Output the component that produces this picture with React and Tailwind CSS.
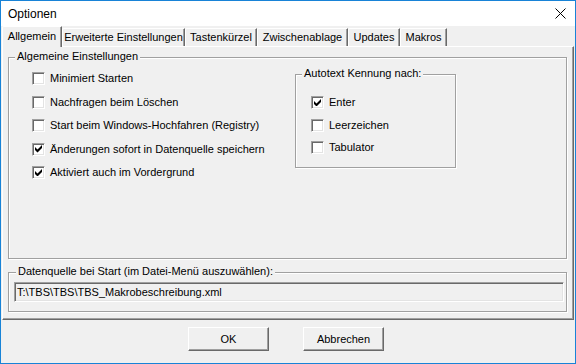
import React from "react";

const font = { fontFamily: '"Liberation Sans", Arial, sans-serif' };

function Check({ checked }) {
  return (
    <div className="w-[13px] h-[13px] shrink-0 bg-white border border-t-[#a0a0a0] border-l-[#a0a0a0] border-b-white border-r-white shadow-[inset_1px_1px_0_#696969,inset_-1px_-1px_0_#e3e3e3] flex items-center justify-center">
      {checked && (
        <svg width="7" height="7.5" viewBox="0 0 7 7.5" className="block">
          <polygon points="0,2 2.5,4.5 7,0 7,3 2.5,7.5 0,5" fill="#000" />
        </svg>
      )}
    </div>
  );
}

function Row({ checked, label }) {
  return (
    <div className="flex items-center gap-[5px] h-[13px]">
      <Check checked={checked} />
      <span className="leading-[13px] whitespace-nowrap">{label}</span>
    </div>
  );
}

function Tab({ label, width, selected }) {
  if (selected) {
    return (
      <div
        className="relative z-10 h-[21px] mb-[-1px] bg-[#f0f0f0] border-l border-t border-r border-l-white border-t-white border-r-[#696969] shadow-[inset_-1px_0_0_#a0a0a0] rounded-tl-[2px] flex items-center justify-center pb-[1px]"
        style={{ width }}
      >
        {label}
      </div>
    );
  }
  return (
    <div
      className="h-[18px] bg-[#f0f0f0] border-l border-t border-r border-l-white border-t-white border-r-[#696969] shadow-[inset_-1px_0_0_#a0a0a0] rounded-tl-[2px] flex items-center justify-center"
      style={{ width }}
    >
      {label}
    </div>
  );
}

function Button({ children }) {
  return (
    <div className="w-[81px] h-[24px] bg-[#f0f0f0] border border-t-white border-l-white border-b-[#696969] border-r-[#696969] shadow-[inset_-1px_-1px_0_#a0a0a0] flex items-center justify-center">
      {children}
    </div>
  );
}

export default function App() {
  return (
    <div
      className="w-[576px] h-[364px] border border-[#1883d7] bg-[#f0f0f0] flex flex-col text-[11px] text-black overflow-hidden"
      style={font}
    >
      {/* Title bar */}
      <div className="h-[25px] bg-white flex items-center justify-between pl-[7px] pr-[9px] shrink-0">
        <span className="text-[12px] leading-[16px]">Optionen</span>
        <svg width="11" height="11" viewBox="0 0 11 11" className="block">
          <path d="M0.5 0.5 L10.5 10.5 M10.5 0.5 L0.5 10.5" stroke="#000" strokeWidth="1" />
        </svg>
      </div>

      <div className="px-[1px] flex flex-col">
        {/* Tabs */}
        <div className="relative z-10 flex items-end h-[20px]">
          <Tab label="Allgemein" width={60} selected />
          <Tab label="Erweiterte Einstellungen" width={123} />
          <Tab label="Tastenkürzel" width={72} />
          <Tab label="Zwischenablage" width={91} />
          <Tab label="Updates" width={52} />
          <Tab label="Makros" width={47} />
        </div>

        {/* Panel */}
        <div className="h-[274px] border-l border-t border-r border-b border-l-white border-t-white border-r-[#696969] border-b-[#696969] shadow-[inset_-1px_-1px_0_#a0a0a0] pl-[5px] pt-[10px] flex flex-col">
          {/* Group 1 */}
          <div className="relative w-[559px] h-[202px] border border-[#a0a0a0] shadow-[inset_1px_1px_0_#fff,1px_1px_0_#fff] flex">
            <span className="absolute left-[6px] top-[-8px] px-[2px] bg-[#f0f0f0] leading-[13px] whitespace-nowrap">
              Algemeine Einstellungen
            </span>
            <div className="w-[286px] pl-[23px] pt-[14px] flex flex-col gap-[10.5px]">
              <Row label="Minimiert Starten" />
              <Row label="Nachfragen beim Löschen" />
              <Row label="Start beim Windows-Hochfahren (Registry)" />
              <Row checked label="Änderungen sofort in Datenquelle speichern" />
              <Row checked label="Aktiviert auch im Vordergrund" />
            </div>
            <div className="relative mt-[16px] w-[161px] h-[94px] border border-[#a0a0a0] shadow-[inset_1px_1px_0_#fff,1px_1px_0_#fff] pl-[15px] pt-[21px] flex flex-col gap-[9.5px]">
              <span className="absolute left-[6px] top-[-8px] px-[2px] bg-[#f0f0f0] leading-[13px] whitespace-nowrap">
                Autotext Kennung nach:
              </span>
              <Row checked label="Enter" />
              <Row label="Leerzeichen" />
              <Row label="Tabulator" />
            </div>
          </div>

          {/* Group 2 */}
          <div className="relative mt-[13px] w-[559px] h-[40px] border border-[#a0a0a0] shadow-[inset_1px_1px_0_#fff,1px_1px_0_#fff] pl-[5px] pt-[9px]">
            <span className="absolute left-[7px] top-[-8px] px-[2px] bg-[#f0f0f0] leading-[13px] whitespace-nowrap">
              Datenquelle bei Start (im Datei-Menü auszuwählen):
            </span>
            <div className="w-[550px] h-[20px] bg-[#f0f0f0] border border-t-[#a0a0a0] border-l-[#a0a0a0] border-b-white border-r-white shadow-[inset_1px_1px_0_#696969,inset_-1px_-1px_0_#e3e3e3] pl-[2px] flex items-center">
              <span className="leading-[13px] whitespace-nowrap">T:\TBS\TBS\TBS_Makrobeschreibung.xml</span>
            </div>
          </div>
        </div>

        {/* Buttons */}
        <div className="mt-[7px] pl-[186px] flex gap-[34px]">
          <Button>OK</Button>
          <Button>Abbrechen</Button>
        </div>
      </div>
    </div>
  );
}
